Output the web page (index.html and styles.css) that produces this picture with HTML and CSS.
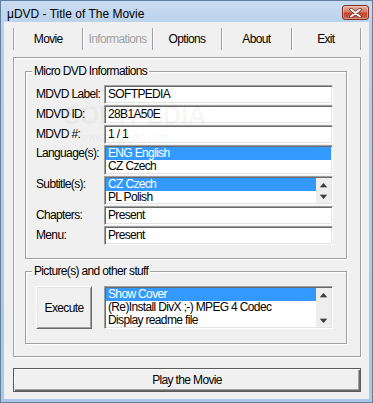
FILE: index.html
```html
<!DOCTYPE html>
<html lang="en">

<head>
    <meta charset="UTF-8">
    <title>μDVD - Title of The Movie</title>
    <link rel="stylesheet" href="styles.css">
</head>

<body>
    <div class="window">
        <!-- Title bar -->
        <div class="titlebar">
            <span class="title">μDVD - Title of The Movie</span>
            <div class="close-btn">
                <svg width="13" height="10" viewBox="0 0 13 10">
                    <path d="M2 1.5 L11 8.5 M11 1.5 L2 8.5" stroke="#6b2a20" stroke-width="3.4" stroke-linecap="round"/>
                    <path d="M2 1.5 L11 8.5 M11 1.5 L2 8.5" stroke="#fff" stroke-width="2" stroke-linecap="round"/>
                </svg>
            </div>
        </div>

        <div class="client">
            <!-- Menu buttons -->
            <div class="tabs">
                <span class="tab">Movie</span>
                <span class="tab disabled">Informations</span>
                <span class="tab">Options</span>
                <span class="tab">About</span>
                <span class="tab">Exit</span>
            </div>

            <div class="frame">
                <fieldset class="group info">
                    <legend>Micro DVD Informations</legend>
                    <div class="row"><label>MDVD Label:</label><div class="field">SOFTPEDIA</div></div>
                    <div class="row"><label>MDVD ID:</label><div class="field">28B1A50E</div></div>
                    <div class="row"><label>MDVD #:</label><div class="field">1 / 1</div></div>
                    <div class="row list-row">
                        <label>Language(s):</label>
                        <div class="listbox">
                            <div class="items">
                                <div class="item selected">ENG English</div>
                                <div class="item">CZ Czech</div>
                            </div>
                        </div>
                    </div>
                    <div class="row list-row sub">
                        <label>Subtitle(s):</label>
                        <div class="listbox">
                            <div class="items">
                                <div class="item selected">CZ Czech</div>
                                <div class="item">PL Polish</div>
                            </div>
                            <div class="scrollbar">
                                <svg width="7" height="5" viewBox="0 0 7 5"><path d="M3.5 0 L7 4 L0 4 Z" fill="#3c3c3c"/><path d="M0 4.5 H7" stroke="#b5b5b5"/></svg>
                                <svg width="7" height="5" viewBox="0 0 7 5"><path d="M0 0.5 H7" stroke="#b5b5b5"/><path d="M0 1 L7 1 L3.5 5 Z" fill="#3c3c3c"/></svg>
                            </div>
                        </div>
                    </div>
                    <div class="row"><label>Chapters:</label><div class="field">Present</div></div>
                    <div class="row"><label>Menu:</label><div class="field">Present</div></div>
                </fieldset>

                <fieldset class="group pics">
                    <legend>Picture(s) and other stuff</legend>
                    <div class="actions">
                        <button class="btn execute">Execute</button>
                        <div class="listbox actions-list">
                            <div class="items">
                                <div class="item selected">Show Cover</div>
                                <div class="item">(Re)Install DivX ;-) MPEG 4 Codec</div>
                                <div class="item">Display readme file</div>
                            </div>
                            <div class="scrollbar">
                                <svg width="7" height="5" viewBox="0 0 7 5"><path d="M3.5 0 L7 4 L0 4 Z" fill="#3c3c3c"/><path d="M0 4.5 H7" stroke="#b5b5b5"/></svg>
                                <svg width="7" height="5" viewBox="0 0 7 5"><path d="M0 0.5 H7" stroke="#b5b5b5"/><path d="M0 1 L7 1 L3.5 5 Z" fill="#3c3c3c"/></svg>
                            </div>
                        </div>
                    </div>
                </fieldset>
            </div>

            <button class="btn play">Play the Movie</button>
        </div>

        <!-- Watermark -->
        <div class="watermark">SOFTPEDIA<sup>™</sup></div>
        <div class="watermark-url">www.softpedia.com</div>
    </div>
</body>

</html>
```

FILE: styles.css
```css
body {
    margin: 0;
    background: #fff;
    font-family: "Liberation Sans", sans-serif;
    font-size: 12px;
    letter-spacing: -0.65px;
    color: #000;
}

.window {
    position: relative;
    width: 373px;
    height: 403px;
    box-sizing: border-box;
    border: 1px solid #62819f;
    background: linear-gradient(#c9dcf1, #b6cfea 30px, #aac7e6);
    display: flex;
    flex-direction: column;
}

.titlebar {
    height: 21px;
    display: flex;
    justify-content: space-between;
    align-items: flex-start;
    padding: 0 3px 0 6px;
}

.title {
    font-size: 12px;
    letter-spacing: 0;
    line-height: 14px;
    margin-top: 6px;
}

.close-btn {
    width: 27px;
    height: 15px;
    margin-top: 4px;
    box-sizing: border-box;
    border: 1px solid #7a3024;
    border-radius: 3px;
    background: linear-gradient(#eab0a2, #d87a64 45%, #c2472f 55%, #cf6048);
    box-shadow: inset 0 0 0 1px rgba(255, 255, 255, 0.35);
    display: flex;
    align-items: center;
    justify-content: center;
}

.client {
    flex: 1;
    margin: 0 3px 3px;
    background: #f0f0f0;
    padding: 6px 7px 0 9px;
}

.tabs {
    display: flex;
    height: 22px;
    border-right: 1px solid #fff;
}

.tab {
    flex: 1;
    text-align: center;
    line-height: 22px;
    border-left: 1px solid #a0a0a0;
    box-shadow: inset 1px 0 #fff;
}

.tab:last-child {
    border-right: 1px solid #a0a0a0;
}

.tab.disabled {
    color: #a3a3a3;
}

.frame {
    margin-top: 7px;
    width: 348px;
    height: 300px;
    box-sizing: border-box;
    border: 1px solid #a0a0a0;
    box-shadow: inset 1px 1px #fff, 1px 1px #fff;
    padding: 6px 0 0 11px;
}

.group {
    margin: 0;
    min-width: 0;
    width: 322px;
    box-sizing: border-box;
    border: 1px solid #a0a0a0;
    box-shadow: inset 1px 1px #fff, 1px 1px #fff;
    padding: 6px 0 13px 10px;
}

.group legend {
    padding: 0 2px;
    margin-left: -4px;
    line-height: 15px;
    background: #f0f0f0;
}

.row {
    display: flex;
    height: 19px;
    margin-top: 1px;
}

.row:first-of-type {
    margin-top: 0;
}

.row label {
    width: 68px;
    line-height: 19px;
    white-space: nowrap;
}

.list-row {
    height: 30px;
}

.list-row.sub {
    height: 29px;
}

.list-row label {
    line-height: 17px;
}

.field,
.listbox {
    width: 229px;
    box-sizing: border-box;
    border: 1px solid;
    border-color: #a0a0a0 #fff #fff #a0a0a0;
    box-shadow: inset 1px 1px #696969, inset -1px -1px #e3e3e3;
    background: #fff;
}

.field {
    padding: 0 3px;
    line-height: 17px;
    white-space: nowrap;
}

.listbox {
    display: flex;
    padding: 1px;
}

.items {
    flex: 1;
}

.item {
    line-height: 13px;
    height: 13px;
    padding: 0 2px;
    white-space: nowrap;
    overflow: hidden;
}

.item.selected {
    background: #3399ff;
    color: #fff;
}

.scrollbar {
    width: 15px;
    background: #eeeeee;
    display: flex;
    flex-direction: column;
    justify-content: space-between;
    align-items: center;
    padding: 5px 0 4px;
}

.pics {
    margin-top: 5px;
    padding: 7px 0 14px 10px;
}

.actions {
    display: flex;
    gap: 12px;
}

.actions-list {
    height: 43px;
}

.btn {
    font-family: inherit;
    font-size: 12px;
    letter-spacing: inherit;
    color: #000;
    background: #f0f0f0;
    padding: 0;
    margin: 0;
}

.execute {
    width: 56px;
    height: 43px;
    border: 1px solid;
    border-color: #fff #696969 #696969 #fff;
    box-shadow: inset 1px 1px #e3e3e3, inset -1px -1px #a0a0a0;
}

.play {
    display: block;
    width: 348px;
    height: 24px;
    margin-top: 11px;
    border: 1px solid #5a5a5a;
    box-shadow: inset 1px 1px #fff, inset -1px -1px #696969, inset -2px -2px #a0a0a0;
}

.watermark {
    position: absolute;
    left: 62px;
    top: 100px;
    font-size: 25px;
    font-weight: bold;
    letter-spacing: 0;
    color: rgba(0, 0, 0, 0.045);
    pointer-events: none;
}

.watermark sup {
    font-size: 9px;
}

.watermark-url {
    position: absolute;
    left: 80px;
    top: 131px;
    font-size: 10px;
    letter-spacing: 0;
    color: rgba(0, 0, 0, 0.06);
    pointer-events: none;
}
```
